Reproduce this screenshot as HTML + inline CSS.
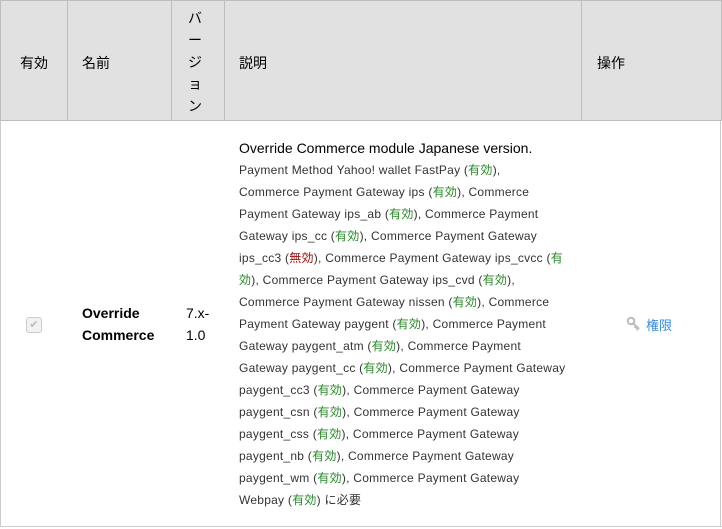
<!DOCTYPE html>
<html><head><meta charset="utf-8"><style>
body{margin:0;background:#fff;font-family:"Liberation Sans","Noto Sans CJK JP",sans-serif;color:#000;}
.t{position:absolute;left:0;top:0;width:722px;height:529px;}
.hd{position:absolute;top:0;height:121px;background:#e1e1e1;border:1px solid #bebebe;box-sizing:border-box;font-size:14px;}
.hd span{position:absolute;top:52px;left:14px;}
.g{color:#2a8a2a}.r{color:#a01010}
</style></head><body>
<div class="t">
<div class="hd" style="left:0;width:68px;"><span style="left:19px">有効</span></div>
<div class="hd" style="left:67px;width:105px;"><span>名前</span></div>
<div class="hd" style="left:171px;width:54px;"><div style="position:absolute;left:15px;top:6px;line-height:22px;width:16px;text-align:center">バ<br>ー<br>ジ<br>ョ<br>ン</div></div>
<div class="hd" style="left:224px;width:358px;"><span>説明</span></div>
<div class="hd" style="left:581px;width:141px;"><span style="left:15px">操作</span></div>
<div style="position:absolute;left:0;top:121px;width:1px;height:406px;background:#ccc"></div>
<div style="position:absolute;left:720px;top:121px;width:1px;height:406px;background:#ccc"></div>
<div style="position:absolute;left:0;top:526px;width:722px;height:1px;background:#ccc"></div>
<div style="position:absolute;left:26px;top:317px;width:16px;height:16px;border:1px solid #ccc;border-radius:3px;background:#f2f2f2;box-sizing:border-box;color:#bbb;font-size:11px;line-height:14px;text-align:center">✔</div>
<div style="position:absolute;left:82px;top:302px;font-weight:bold;font-size:14px;line-height:22px">Override<br>Commerce</div>
<div style="position:absolute;left:186px;top:302px;font-size:14px;line-height:22px">7.x-<br>1.0</div>
<div style="position:absolute;left:239px;top:137px;font-size:14px;line-height:22px;white-space:nowrap">Override Commerce module Japanese version.</div>
<div style="position:absolute;left:239px;top:159px;font-size:12px;line-height:22px;color:#333;white-space:nowrap;letter-spacing:0.25px">
Payment Method Yahoo! wallet FastPay (<span class="g">有効</span>),<br>
Commerce Payment Gateway ips (<span class="g">有効</span>), Commerce<br>
Payment Gateway ips_ab (<span class="g">有効</span>), Commerce Payment<br>
Gateway ips_cc (<span class="g">有効</span>), Commerce Payment Gateway<br>
ips_cc3 (<span class="r">無効</span>), Commerce Payment Gateway ips_cvcc (<span class="g">有</span><br>
<span class="g">効</span>), Commerce Payment Gateway ips_cvd (<span class="g">有効</span>),<br>
Commerce Payment Gateway nissen (<span class="g">有効</span>), Commerce<br>
Payment Gateway paygent (<span class="g">有効</span>), Commerce Payment<br>
Gateway paygent_atm (<span class="g">有効</span>), Commerce Payment<br>
Gateway paygent_cc (<span class="g">有効</span>), Commerce Payment Gateway<br>
paygent_cc3 (<span class="g">有効</span>), Commerce Payment Gateway<br>
paygent_csn (<span class="g">有効</span>), Commerce Payment Gateway<br>
paygent_css (<span class="g">有効</span>), Commerce Payment Gateway<br>
paygent_nb (<span class="g">有効</span>), Commerce Payment Gateway<br>
paygent_wm (<span class="g">有効</span>), Commerce Payment Gateway<br>
Webpay (<span class="g">有効</span>) に必要</div>
<svg style="position:absolute;left:626px;top:316px" width="16" height="16" viewBox="0 0 16 16"><circle cx="5" cy="5" r="3.3" fill="none" stroke="#bbb" stroke-width="2"/><path d="M7.5 7.5L13 13M10 10.5l-1.5 1.5M12 12.5l-1.5 1.5" stroke="#bbb" stroke-width="2"/></svg>
<div style="position:absolute;left:646px;top:315px;font-size:13px;color:#3a8de0">権限</div>
</div>
</body></html>
